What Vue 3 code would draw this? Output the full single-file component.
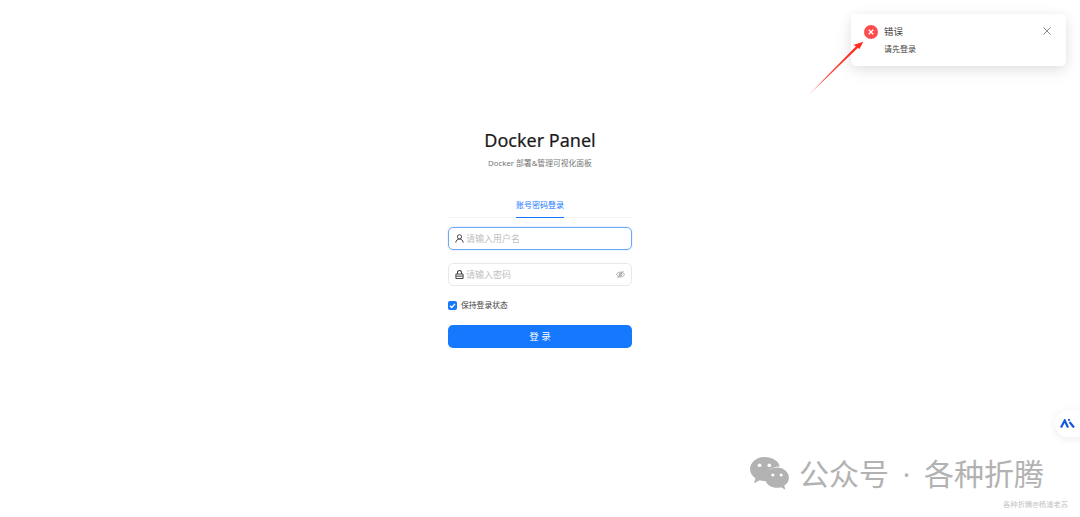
<template>
  <div class="page">
    <main class="login">
      <h1>Docker Panel</h1>
      <p class="subtitle">Docker 部署&amp;管理可视化面板</p>

      <div class="tabs">
        <span class="tab">账号密码登录</span>
      </div>

      <form class="form" @submit.prevent>
        <label class="field focused">
          <svg class="icon" viewBox="0 0 12 12" fill="none" stroke="#444" stroke-width="1.300">
            <circle cx="6" cy="3.800" r="2.800" />
            <path d="M1 11.500c.3-2.900 2.200-4.800 5-4.800s4.700 1.900 5 4.800" />
          </svg>
          <input type="text" placeholder="请输入用户名" />
        </label>

        <label class="field">
          <svg class="icon" viewBox="0 0 12 12" fill="none" stroke="#444" stroke-width="1.400">
            <rect x="1.200" y="5.400" width="9.600" height="6" rx="1" />
            <path d="M3.300 5.400V3.400a2.700 2.700 0 0 1 5.400 0v2" />
            <path d="M1.500 8.200h9" />
          </svg>
          <input type="password" placeholder="请输入密码" />
          <svg class="icon eye" viewBox="0 0 12 12" fill="none" stroke="#8c8c8c" stroke-width="1">
            <path d="M.6 6c1.300-2.100 3.100-3.200 5.400-3.200s4.100 1.100 5.400 3.200c-1.300 2.100-3.100 3.200-5.400 3.200S1.900 8.100.6 6z" />
            <circle cx="6" cy="6" r="1.700" />
            <path d="M2.200 10.800l7.600-9.600" />
          </svg>
        </label>

        <label class="remember">
          <span class="check">
            <svg viewBox="0 0 10 10" fill="none" stroke="#fff" stroke-width="1.500">
              <path d="M2.200 5.200l2 2 3.600-4" />
            </svg>
          </span>
          保持登录状态
        </label>

        <button type="submit" class="submit">登 录</button>
      </form>
    </main>

    <div class="notice">
      <span class="notice-icon">
        <svg viewBox="0 0 14 14" fill="none" stroke="#fff" stroke-width="1.300">
          <path d="M4.800 4.800l4.400 4.400M9.200 4.800l-4.400 4.400" />
        </svg>
      </span>
      <div class="notice-body">
        <div class="notice-title">错误</div>
        <div class="notice-text">请先登录</div>
      </div>
      <svg class="notice-close" viewBox="0 0 10 10" fill="none" stroke="#8c8c8c" stroke-width="1">
        <path d="M1.500 1.500l7 7M8.500 1.500l-7 7" />
      </svg>
    </div>

    <!-- annotation arrow drawn over the screenshot -->
    <svg class="arrow" viewBox="0 0 60 58">
      <defs>
        <linearGradient id="arrowFade" x1="0" y1="1" x2="1" y2="0">
          <stop offset="0" stop-color="#ff3b30" stop-opacity=".45" />
          <stop offset=".3" stop-color="#ff3b30" />
          <stop offset="1" stop-color="#ff2a1f" />
        </linearGradient>
      </defs>
      <path d="M1 56.500 L50 6.200 L47.300 5 L57.300 1.700 L53.300 9.300 L52 7.800 Z" fill="url(#arrowFade)" />
    </svg>

    <div class="float-btn">
      <svg viewBox="0 0 15 9" width="15" height="9" fill="none" stroke="#1558e0" stroke-width="2.200">
        <path d="M1 8.500l3.700-7 3.300 7" />
        <path d="M9.500 3l4.500 5.500" />
        <circle cx="9" cy="1" r="1.100" fill="#1558e0" stroke="none" />
      </svg>
    </div>

    <div class="watermark">
      <div class="wm-main">
        <svg class="wechat" viewBox="0 0 42 36" fill="#b2b2b2">
          <path d="M16 1C7.700 1 1 6.500 1 13.300c0 3.900 2.200 7.300 5.600 9.600L5 28l5.900-3c1.600.5 3.300.7 5.100.7.500 0 1 0 1.400-.1a11 11 0 0 1-.5-3.200c0-6.500 6.200-11.700 13.900-11.700h.8C30.300 5 23.800 1 16 1z" />
          <path d="M41 22.300c0-5.800-5.700-10.400-12.300-10.400S16.300 16.500 16.300 22.300s5.700 10.400 12.400 10.400c1.400 0 2.800-.2 4.100-.6l4.600 2.500-1.200-4.200c3-2 4.800-4.800 4.800-8.100z" />
          <circle cx="10.800" cy="9.500" r="1.900" fill="#fff" />
          <circle cx="20.800" cy="9.500" r="1.900" fill="#fff" />
          <circle cx="24.500" cy="19.500" r="1.600" fill="#fff" />
          <circle cx="33" cy="19.500" r="1.600" fill="#fff" />
        </svg>
        <span class="wm-first">公众号</span>
        <span class="wm-dot">·</span>
        <span>各种折腾</span>
      </div>
      <div class="wm-sub">各种折腾@杨浦老苏</div>
    </div>
  </div>
</template>

<script setup>
</script>

<style>
html,
body {
  margin: 0;
  background: #fff;
}
</style>

<style scoped>
.page {
  position: relative;
  height: 517px;
  overflow: hidden;
  background: #fff;
  font-family: "Noto Sans", "Noto Sans CJK SC", "Liberation Sans", sans-serif;
  color: #333;
}

.login {
  width: 184px;
  margin: 0 auto;
  padding-top: 127px;
  display: flex;
  flex-direction: column;
  align-items: center;
}

h1 {
  margin: 0;
  font-size: 18px;
  line-height: 27px;
  font-weight: 400;
  color: #1a1a1a;
  white-space: nowrap;
  -webkit-text-stroke: 0.2px #1a1a1a;
}

.subtitle {
  margin: 2px 0 0;
  font-size: 7.800px;
  line-height: 14px;
  color: #777;
  white-space: nowrap;
}

.tabs {
  width: 100%;
  margin-top: 28px;
  display: flex;
  justify-content: center;
  border-bottom: 1px solid #f5f5f5;
}

.tab {
  padding-bottom: 5px;
  font-size: 8px;
  line-height: 14px;
  color: #1677ff;
  border-bottom: 1px solid #1677ff;
  margin-bottom: -1px;
}

.form {
  width: 100%;
  margin-top: 9px;
  display: flex;
  flex-direction: column;
}

.field {
  height: 23px;
  box-sizing: border-box;
  padding: 0 6px;
  display: flex;
  align-items: center;
  gap: 2px;
  border: 1px solid #e8e8e8;
  border-radius: 5px;
  background: #fff;
}

.field.focused {
  border-color: #6aa9f8;
  box-shadow: 0 0 0 1px rgba(22, 119, 255, 0.08);
}

.field + .field {
  margin-top: 13px;
}

.icon {
  width: 9px;
  height: 9px;
  flex: none;
}

.field input {
  flex: 1;
  min-width: 0;
  border: 0;
  outline: 0;
  padding: 0;
  background: transparent;
  font: inherit;
  font-size: 9px;
}

.field input::placeholder {
  color: #bfbfbf;
}

.remember {
  margin-top: 13px;
  display: flex;
  align-items: center;
  gap: 4px;
  font-size: 7.800px;
  line-height: 12px;
  color: #444;
}

.check {
  width: 9px;
  height: 9px;
  border-radius: 2px;
  background: #1677ff;
  display: flex;
}

.submit {
  height: 23px;
  margin-top: 14px;
  padding: 0 0 1px;
  border: 0;
  border-radius: 5px;
  background: #1677ff;
  color: #fff;
  font: inherit;
  font-size: 9.500px;
}

.notice {
  position: absolute;
  top: 14px;
  left: 851px;
  width: 215px;
  height: 52px;
  box-sizing: border-box;
  padding: 11px 14px 11px 13px;
  display: flex;
  gap: 6px;
  border-radius: 5px;
  background: #fff;
  box-shadow: 0 3px 12px rgba(0, 0, 0, 0.1), 0 6px 24px rgba(0, 0, 0, 0.04);
}

.notice-icon {
  width: 14px;
  height: 14px;
  flex: none;
  border-radius: 50%;
  background: #ff4d4f;
  display: flex;
}

.notice-body {
  flex: 1;
}

.notice-title {
  font-size: 9.500px;
  line-height: 14px;
  color: #444;
}

.notice-text {
  margin-top: 4px;
  font-size: 8px;
  line-height: 12px;
  color: #444;
}

.notice-close {
  width: 10px;
  height: 10px;
  margin-top: 1px;
  flex: none;
}

.arrow {
  position: absolute;
  left: 806px;
  top: 40px;
  width: 60px;
  height: 58px;
}

.float-btn {
  position: absolute;
  left: 1055px;
  top: 410px;
  width: 30px;
  height: 27px;
  border-radius: 13px 0 0 13px;
  background: #fff;
  box-shadow: 0 2px 8px rgba(0, 0, 0, 0.08);
  display: flex;
  align-items: center;
  padding-left: 5px;
  box-sizing: border-box;
}

.watermark {
  position: absolute;
  left: 749px;
  top: 456px;
  width: 319px;
}

.wm-main {
  display: flex;
  align-items: center;
  color: #b2b2b2;
  font-size: 30px;
  line-height: 34px;
  white-space: nowrap;
}

.wm-first {
  margin-left: 9px;
}

.wm-dot {
  width: 35px;
  text-align: center;
  font-size: 28px;
}

.wechat {
  width: 41px;
  height: 35px;
  flex: none;
}

.wm-sub {
  margin-top: 8px;
  text-align: right;
  font-size: 7.300px;
  line-height: 10px;
  color: #c4c4c4;
}
</style>
